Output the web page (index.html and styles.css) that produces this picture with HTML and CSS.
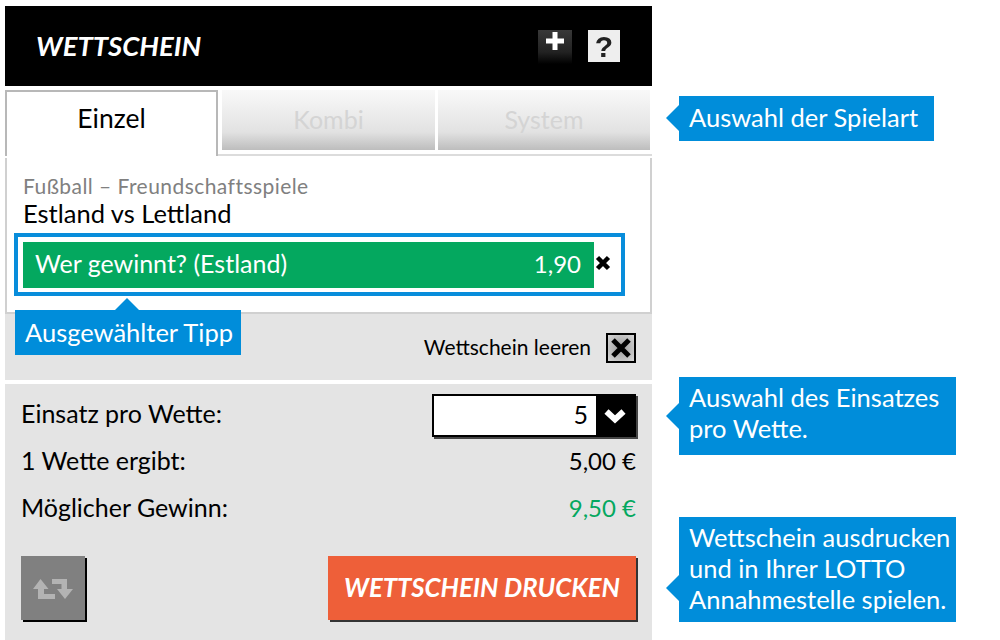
FILE: index.html
```html
<!DOCTYPE html>
<html lang="de">
<head>
    <meta charset="UTF-8">
    <title>Wettschein</title>
    <link rel="stylesheet" href="styles.css">
</head>
<body>
    <div class="page">
        <div class="ticket">
            <div class="header">
                <h1>WETTSCHEIN</h1>
                <div class="plus">
                    <svg width="20" height="20" viewBox="0 0 20 20"><path class="blur" d="M7.500 1h5v6.500H19v5h-6.500V19h-5v-6.500H1v-5h6.500z" fill="#fff"/></svg>
                </div>
                <div class="help"><span>?</span></div>
            </div>

            <div class="tabs">
                <div class="tab active">Einzel</div>
                <div class="tab">Kombi</div>
                <div class="tab">System</div>
            </div>

            <div class="bet">
                <div class="league">Fußball – Freundschaftsspiele</div>
                <div class="match">Estland vs Lettland</div>
                <div class="tip">
                    <div class="tip-bar">
                        <span>Wer gewinnt? (Estland)</span>
                        <span class="odds">1,90</span>
                    </div>
                    <svg class="tip-del" width="16" height="16" viewBox="0 0 16 16"><path d="M2.500 2.500l11 11M13.500 2.500l-11 11" stroke="#000" stroke-width="4.500"/></svg>
                </div>
                <div class="note note-up">Ausgewählter Tipp</div>
            </div>

            <div class="clear">
                <span>Wettschein leeren</span>
                <div class="clear-btn">
                    <svg width="26" height="26" viewBox="0 0 26 26"><path class="blur" d="M5 5l16 16M21 5L5 21" stroke="#000" stroke-width="5"/></svg>
                </div>
            </div>

            <div class="stake">
                <div class="row">
                    <span>Einsatz pro Wette:</span>
                    <div class="select">
                        <div class="select-val">5</div>
                        <div class="select-arrow">
                            <svg width="24" height="16" viewBox="0 0 24 16"><path class="blur" d="M3.500 3.500l8.500 8 8.500-8" fill="none" stroke="#fff" stroke-width="6"/></svg>
                        </div>
                    </div>
                </div>
                <div class="row">
                    <span>1 Wette ergibt:</span>
                    <span class="amount">5,00 €</span>
                </div>
                <div class="row">
                    <span>Möglicher Gewinn:</span>
                    <span class="amount win">9,50 €</span>
                </div>
                <div class="actions">
                    <div class="swap">
                        <svg width="42" height="24" viewBox="0 0 42 24"><path class="blur" d="M8.500 2L1 12h5v10h17v-5H12V12h4.500zM20 2h15v10h6l-8 10-8-10h4.500V7H20z" fill="#b3b3b3"/></svg>
                    </div>
                    <div class="print">WETTSCHEIN DRUCKEN</div>
                </div>
            </div>
        </div>

        <div class="notes">
            <div class="note note-left n1">Auswahl der Spielart</div>
            <div class="note note-left n2">Auswahl des Einsatzes<br>pro Wette.</div>
            <div class="note note-left n3">Wettschein ausdrucken<br>und in Ihrer LOTTO<br>Annahmestelle spielen.</div>
        </div>
    </div>
</body>
</html>
```

FILE: styles.css
```css
html, body {
    margin: 0;
    padding: 0;
    background: #fff;
    overflow: hidden;
}
body {
    font-family: Lato, "Noto Sans", sans-serif;
    font-size: 25px;
    color: #000;
}
.page {
    display: flex;
    align-items: flex-start;
    padding: 6px 0 0 5px;
}
.ticket {
    width: 647px;
    flex: none;
}
.blur {
    filter: blur(0.7px);
}

/* header */
.header {
    height: 80px;
    background: #000;
    display: flex;
    align-items: flex-start;
}
.header h1 {
    margin: 23px auto 0 31px;
    font-size: 27.500px;
    line-height: 34px;
    font-style: italic;
    font-weight: 700;
    color: #fff;
}
.plus {
    width: 34px;
    height: 34px;
    margin-top: 24px;
    background: linear-gradient(#383838, #222 65%, #000);
    display: flex;
    justify-content: center;
}
.plus svg {
    margin-top: 1px;
}
.help {
    width: 32px;
    height: 32px;
    margin: 24px 32px 0 16px;
    background: #eee;
    color: #222;
    font-family: "Liberation Sans", sans-serif;
    font-weight: 700;
    font-size: 30px;
    line-height: 33px;
    text-align: center;
}
.help span {
    display: block;
    filter: blur(0.6px);
}

/* tabs */
.tabs {
    display: flex;
    margin-top: 4px;
    height: 66px;
    position: relative;
}
.tab {
    width: 213px;
    height: 60px;
    flex: none;
    margin-right: 3px;
    background: linear-gradient(#f9f9f9, #e2e2e2 70%, #bdbdbd);
    color: #d4d4d4;
    text-align: center;
    line-height: 58px;
    font-size: 25px;
    box-sizing: border-box;
}
.tab:last-child {
    width: 212px;
    margin-right: 0;
}
.tab.active {
    height: 66px;
    margin-right: 4px;
    background: #fff;
    color: #000;
    border: 2px solid #b8b8b8;
    border-bottom: 0;
    font-size: 26.500px;
    line-height: 52px;
    z-index: 1;
}
.tabs::after {
    content: "";
    position: absolute;
    left: 213px;
    right: 0;
    bottom: 0;
    height: 2px;
    background: #dcdcdc;
}

/* selected bet */
.bet {
    position: relative;
    height: 140px;
    margin-top: 2px;
    padding: 14px 7px 0 7px;
    border: 2px solid #d0d0d0;
    border-top: 0;
    background: #fff;
}
.league {
    padding-left: 9px;
    font-size: 21px;
    letter-spacing: 0.45px;
    line-height: 28px;
    color: #808080;
}
.match {
    padding-left: 9px;
    font-size: 25.500px;
    line-height: 26px;
}
.tip {
    display: flex;
    align-items: flex-start;
    width: 611px;
    height: 63px;
    margin-top: 7px;
    padding: 5px;
    border: 4px solid #088ddb;
    box-sizing: border-box;
}
.tip-bar {
    width: 571px;
    height: 46px;
    flex: none;
    display: flex;
    justify-content: space-between;
    align-items: center;
    padding: 0 13px 4px 12px;
    box-sizing: border-box;
    background: #04a85f;
    color: #fff;
}
.odds {
    font-size: 24px;
}
.tip-del {
    margin: 13px 0 0 1px;
}

/* callouts */
.note {
    background: #008dda;
    color: #fff;
    font-size: 25.500px;
    line-height: 31px;
    position: relative;
    box-sizing: border-box;
    white-space: nowrap;
}
.note::before {
    content: "";
    position: absolute;
    width: 0;
    height: 0;
    border: 13px solid transparent;
}
.note-up {
    position: absolute;
    left: 8px;
    top: 152px;
    width: 226px;
    height: 45px;
    padding: 7px 10px;
}
.note-up::before {
    left: 100px;
    top: -24px;
    border-width: 12px;
    border-bottom-color: #008dda;
}
.note-left::before {
    left: -26px;
    border-right-color: #008dda;
}
.notes {
    margin-left: 27px;
    display: flex;
    flex-direction: column;
    align-items: flex-start;
}
.n1 {
    width: 255px;
    height: 45px;
    margin-top: 90px;
    padding: 6px 10px;
}
.n1::before {
    top: 9px;
}
.n2 {
    width: 277px;
    height: 78px;
    margin-top: 236px;
    padding: 5px 10px;
}
.n2::before {
    top: 26px;
}
.n3 {
    width: 277px;
    height: 105px;
    margin-top: 62px;
    padding: 5px 10px;
}
.n3::before {
    top: 58px;
}

/* clear row */
.clear {
    height: 66px;
    background: #e4e4e4;
    display: flex;
    justify-content: flex-end;
    align-items: center;
    padding: 0 16px 0 0;
    font-size: 21px;
}
.clear > span {
    margin-bottom: 2px;
}
.clear-btn {
    width: 30px;
    height: 30px;
    margin-left: 15px;
    margin-top: 1px;
    border: 2px solid #000;
    box-sizing: border-box;
    background: radial-gradient(#999, #d8d8d8);
    display: flex;
    align-items: center;
    justify-content: center;
}

/* stake */
.stake {
    margin-top: 4px;
    height: 256px;
    background: #e4e4e4;
    padding: 8px 16px 0 16px;
    box-sizing: border-box;
}
.row {
    display: flex;
    justify-content: space-between;
    align-items: center;
    height: 47px;
}
.row > span {
    margin-bottom: 5px;
}
.amount {
    font-size: 24px;
}
.win {
    color: #04a85f;
}
.select {
    width: 204px;
    height: 43px;
    display: flex;
    border: 2px solid #000;
    box-sizing: border-box;
    box-shadow: 2px 2px 0 #444;
    background: #fff;
}
.select-val {
    flex: 1;
    text-align: right;
    padding-right: 8px;
    line-height: 37px;
}
.select-arrow {
    width: 38px;
    background: #000;
    display: flex;
    align-items: center;
    justify-content: center;
}
.actions {
    display: flex;
    justify-content: space-between;
    margin-top: 23px;
}
.swap {
    width: 64px;
    height: 64px;
    background: #808080;
    box-shadow: 2px 2px 0 #000;
    display: flex;
    align-items: center;
    justify-content: center;
}
.swap svg {
    margin-top: 2px;
}
.print {
    width: 308px;
    height: 64px;
    background: #ee5f39;
    box-shadow: 2px 2px 0 #333;
    color: #fff;
    font-size: 25.700px;
    font-style: italic;
    font-weight: 700;
    line-height: 62px;
    text-align: center;
}
```
